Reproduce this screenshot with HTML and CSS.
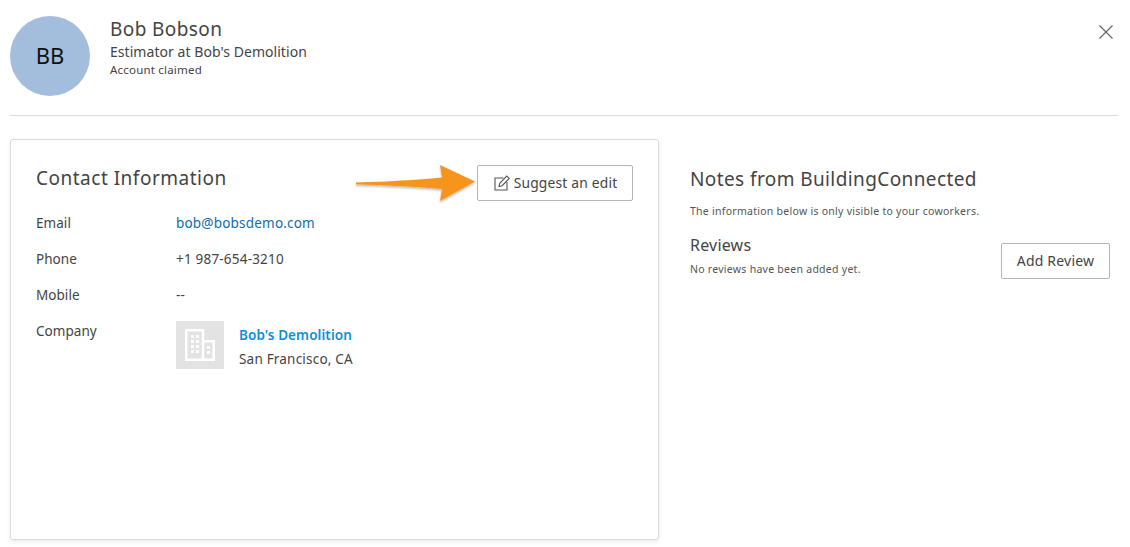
FILE: index.html
```html
<!DOCTYPE html>
<html lang="en">
<head>
<meta charset="utf-8">
<title>Bob Bobson</title>
<link rel="stylesheet" href="styles.css">
</head>
<body>
<div class="page">
  <header class="header">
    <div class="avatar">BB</div>
    <div class="identity">
      <div class="name">Bob Bobson</div>
      <div class="role">Estimator at Bob's Demolition</div>
      <div class="status">Account claimed</div>
    </div>
    <svg class="close" width="16" height="16" viewBox="0 0 16 16" aria-label="Close"><path d="M1.5 1.5L14.5 14.5M14.5 1.5L1.5 14.5" stroke="#666" stroke-width="1.2" fill="none"/></svg>
  </header>
  <main class="content">
    <section class="card">
      <div class="card-head">
        <h2 class="title">Contact Information</h2>
        <button class="btn btn-edit">
          <svg width="16" height="16" viewBox="0 0 16 16"><path d="M9.5 3H1V15H13V7" stroke="#555" stroke-width="1.1" fill="none"/><path d="M5 11.5L5.7 8.3L12.8 1L15.2 3.4L8.2 10.7Z" stroke="#555" stroke-width="1.1" fill="none"/></svg>
          Suggest an edit
        </button>
      </div>
      <dl class="fields">
        <div class="field"><dt>Email</dt><dd><a class="link" href="#">bob@bobsdemo.com</a></dd></div>
        <div class="field"><dt>Phone</dt><dd>+1 987-654-3210</dd></div>
        <div class="field"><dt>Mobile</dt><dd>--</dd></div>
        <div class="field"><dt>Company</dt><dd class="company">
          <div class="logo">
            <svg width="30" height="32" viewBox="0 0 30 32"><path d="M1.25 1.25H18V30.75H1.25Z M18 12.25H28.75V30.75H18Z" fill="none" stroke="#fff" stroke-width="2.5"/><g fill="#fff"><rect x="6" y="6" width="3" height="3"/><rect x="11" y="6" width="3" height="3"/><rect x="6" y="11" width="3" height="3"/><rect x="11" y="11" width="3" height="3"/><rect x="6" y="16" width="3" height="3"/><rect x="11" y="16" width="3" height="3"/><rect x="6" y="21" width="3" height="3"/><rect x="11" y="21" width="3" height="3"/><rect x="22" y="17" width="3" height="3"/><rect x="22" y="22" width="3" height="3"/></g></svg>
          </div>
          <div class="company-text">
            <a class="company-name" href="#">Bob's Demolition</a>
            <div>San Francisco, CA</div>
          </div>
        </dd></div>
      </dl>
    </section>
    <aside class="notes">
      <h2 class="title notes-title">Notes from BuildingConnected</h2>
      <p class="small notes-sub">The information below is only visible to your coworkers.</p>
      <div class="reviews">
        <div>
          <h3 class="reviews-title">Reviews</h3>
          <p class="small">No reviews have been added yet.</p>
        </div>
        <button class="btn btn-review">Add Review</button>
      </div>
    </aside>
  </main>
  <svg class="arrow" width="130" height="46" viewBox="0 0 130 46">
    <defs><filter id="s" x="-10%" y="-20%" width="120%" height="150%"><feDropShadow dx="0" dy="1.5" stdDeviation="1.2" flood-color="#000" flood-opacity=".3"/></filter></defs>
    <path d="M6 22.5C40 21.5 65 20 92 17.5L90 5L125 21.5L90 41L92 29C60 26.5 35 25 6 24.5Z" fill="#f7941d" filter="url(#s)"/>
  </svg>
</div>
</body>
</html>
```
FILE: styles.css
```css
* { box-sizing: border-box; }
html, body { margin: 0; padding: 0; background: #fff; }
body {
  font-family: "Noto Sans", "Open Sans", sans-serif;
  color: #444;
  font-size: 13.5px;
  letter-spacing: .2px;
}
.page { position: relative; width: 1130px; height: 547px; overflow: hidden; padding: 16px 12px 0 10px; }
.header {
  display: flex;
  align-items: flex-start;
  height: 100px;
  border-bottom: 1px solid #dcdcdc;
}
.avatar {
  width: 80px; height: 80px; border-radius: 50%;
  background: #a3bedd; color: #111;
  display: flex; align-items: center; justify-content: center;
  font-size: 22px; letter-spacing: 0;
  padding-bottom: 2px;
  flex: none;
}
.identity { margin-left: 20px; flex: 1; }
.name { font-size: 19px; line-height: 26px; margin-top: 0; margin-bottom: -1px; letter-spacing: .4px; }
.role { font-size: 14px; line-height: 19px; margin-top: 1px; letter-spacing: .05px; }
.status { font-size: 11.5px; line-height: 17px; }
.close { margin: 8px 4px 0 0; }
.content { display: flex; margin-top: 23px; }
.card {
  width: 649px; height: 401px; flex: none;
  border: 1px solid #d9d9d9; border-radius: 3px;
  box-shadow: 0 2px 5px rgba(0,0,0,.08);
  padding: 25px 25px 0;
}
.card-head { display: flex; justify-content: space-between; align-items: flex-start; height: 48px; }
.title { margin: 0; font-size: 19px; font-weight: 400; line-height: 26px; letter-spacing: .5px; }
.btn {
  font-family: inherit; font-size: 14px; letter-spacing: .2px; color: #444;
  background: #fff; border: 1px solid #b4b4b4; border-radius: 2px; height: 36px;
  display: flex; align-items: center; justify-content: center; padding: 0 0 2px;
}
.btn-edit { width: 156px; gap: 4px; font-size: 13.8px; padding-left: 1px; }
.btn-edit svg { margin-top: 2px; }
.fields { margin: 0; }
.field { display: flex; margin-bottom: 16px; min-height: 20px; line-height: 20px; }
.field dt { width: 140px; flex: none; letter-spacing: .05px; }
.field dd { margin: 0; }
.link { color: #0f6cb0; text-decoration: none; }
.company { display: flex; gap: 15px; }
.logo { width: 48px; height: 48px; background: #e3e3e3; display: flex; align-items: center; justify-content: center; }
.company-text { display: flex; flex-direction: column; gap: 4px; padding-top: 4px; }
.company-name { color: #0f8fd6; font-weight: 600; text-decoration: none; letter-spacing: .08px; }
.notes { flex: 1; margin-left: 31px; padding-top: 27px; }
.notes-title { font-size: 19px; line-height: 26px; letter-spacing: .4px; }
.small { margin: 0; font-size: 10.5px; line-height: 16px; color: #555; letter-spacing: .27px; }
.notes-sub { margin-top: 11px; }
.reviews { display: flex; justify-content: space-between; align-items: flex-start; margin-top: 12px; padding-right: 8px; }
.reviews-title { margin: 4px 0 6px; font-size: 16px; font-weight: 400; line-height: 20px; }
.btn-review { width: 109px; margin-top: 12px; }
.arrow { position: absolute; left: 350px; top: 160px; }
```
